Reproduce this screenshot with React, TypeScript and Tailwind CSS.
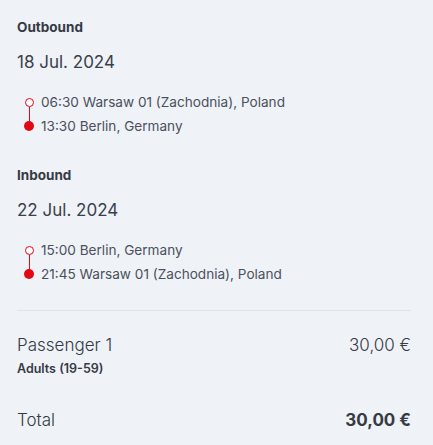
const OUTBOUND = {
  label: "Outbound",
  date: "18 Jul. 2024",
  from: "06:30 Warsaw 01 (Zachodnia), Poland",
  to: "13:30 Berlin, Germany",
};

const INBOUND = {
  label: "Inbound",
  date: "22 Jul. 2024",
  from: "15:00 Berlin, Germany",
  to: "21:45 Warsaw 01 (Zachodnia), Poland",
};

function Trip({ trip }: { trip: typeof OUTBOUND }) {
  return (
    <div>
      <div className="text-[13.5px] font-bold leading-[16px]">{trip.label}</div>
      <div className="mt-[17px] text-[17px] leading-[20px] text-[#3a3f4b]">{trip.date}</div>
      <div className="mt-[20px] flex">
        <div className="flex w-[24px] shrink-0 flex-col items-center pt-[6px]">
          <span className="block h-[9px] w-[9px] shrink-0 rounded-full border border-[#e30613] bg-white" />
          <span className="block h-[14px] w-px shrink-0 bg-[#e30613]" />
          <span className="block h-[10px] w-[10px] shrink-0 rounded-full bg-[#e30613]" />
        </div>
        <div className="flex flex-col gap-[3px] text-[13.6px] leading-[21px] text-[#4a505c]">
          <span>{trip.from}</span>
          <span>{trip.to}</span>
        </div>
      </div>
    </div>
  );
}

export default function App() {
  return (
    <div
      className="h-[445px] w-[433px] bg-[#eff2f7] pl-[17px] pr-[22px] pt-[19px] text-[#353a45]"
      style={{ fontFamily: "Inter, 'Noto Sans', sans-serif" }}
    >
      <Trip trip={OUTBOUND} />
      <div className="mt-[30px]">
        <Trip trip={INBOUND} />
      </div>
      <div className="mt-[25px] h-px bg-[#dfe3ea]" />
      <div className="mt-[23px] flex justify-between">
        <div>
          <div className="text-[17px] font-light leading-[22px]">Passenger 1</div>
          <div className="mt-[5px] text-[12.5px] font-semibold leading-[15px]">Adults (19-59)</div>
        </div>
        <div className="text-[17px] font-light leading-[22px]">30,00 €</div>
      </div>
      <div className="mt-[33px] flex justify-between text-[17px] leading-[22px]">
        <span className="font-light">Total</span>
        <span className="font-bold">30,00 €</span>
      </div>
    </div>
  );
}
